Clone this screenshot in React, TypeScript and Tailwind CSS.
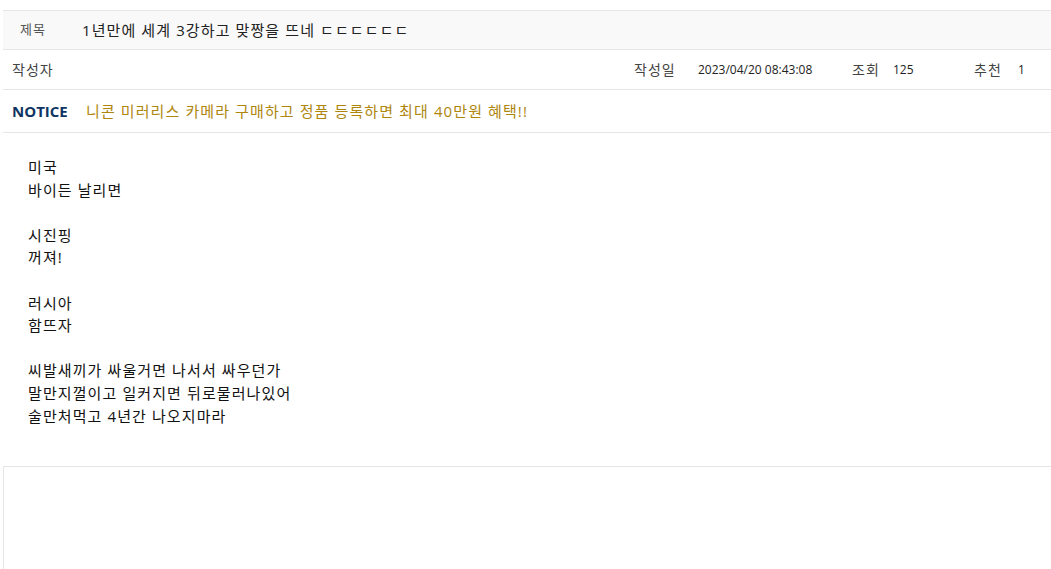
const font = "font-['Open_Sans','Noto_Sans_CJK_KR',sans-serif]";

const bodyLines = [
	"미국",
	"바이든 날리면",
	"",
	"시진핑",
	"꺼져!",
	"",
	"러시아",
	"함뜨자",
	"",
	"씨발새끼가 싸울거면 나서서 싸우던가",
	"말만지껄이고 일커지면 뒤로물러나있어",
	"술만처먹고 4년간 나오지마라",
];

export default function App() {
	return (
		<div className={`min-h-screen bg-white pt-[10px] pl-[3px] ${font}`}>
			<div className="border-t border-[#e6e6e6]">
				{/* title */}
				<div className="flex h-[39px] items-center border-b border-[#e6e6e6] bg-[#f9f9f9]">
					<span className="w-[79px] pl-[17px] text-[13px] tracking-[1px] text-[#555]">제목</span>
					<span className="text-[15px] tracking-[1.1px] text-[#222]">1년만에 세계 3강하고 맞짱을 뜨네 ㄷㄷㄷㄷㄷㄷ</span>
				</div>

				{/* meta */}
				<div className="flex h-[40px] items-center border-b border-[#e6e6e6] text-[#444]">
					<span className="pl-[9px] text-[14px] tracking-[1px]">작성자</span>
					<div className="ml-auto flex items-center pr-[3px]">
						<span className="w-[64px] text-[14px] tracking-[1px]">작성일</span>
						<span className="w-[154px] text-[12px] text-[#222]">2023/04/20 08:43:08</span>
						<span className="w-[41px] text-[14px] tracking-[1px]">조회</span>
						<span className="w-[81px] text-[12px] text-[#222]">125</span>
						<span className="w-[44px] text-[14px] tracking-[1px]">추천</span>
						<span className="w-[30px] text-[12px] text-[#222]">1</span>
					</div>
				</div>

				{/* notice */}
				<div className="flex h-[43px] items-center border-b border-[#e6e6e6]">
					<span className="w-[83px] pl-[9px] text-[15px] font-bold text-[#0f3462]">NOTICE</span>
					<span className="text-[15px] tracking-[1.1px] text-[#ae860e]">니콘 미러리스 카메라 구매하고 정품 등록하면 최대 40만원 혜택!!</span>
				</div>
			</div>

			{/* body */}
			<div className="pt-[23px] pl-[25px] pb-[32px] text-[15px] leading-[22.6px] tracking-[1.1px] text-[#111]">
				{bodyLines.map((line, i) => (
					<div key={i} className="h-[22.6px]">
						{line}
					</div>
				))}
			</div>

			<div className="mt-[7px] h-[120px] border-t border-l border-[#e6e6e6]"></div>
		</div>
	);
}
